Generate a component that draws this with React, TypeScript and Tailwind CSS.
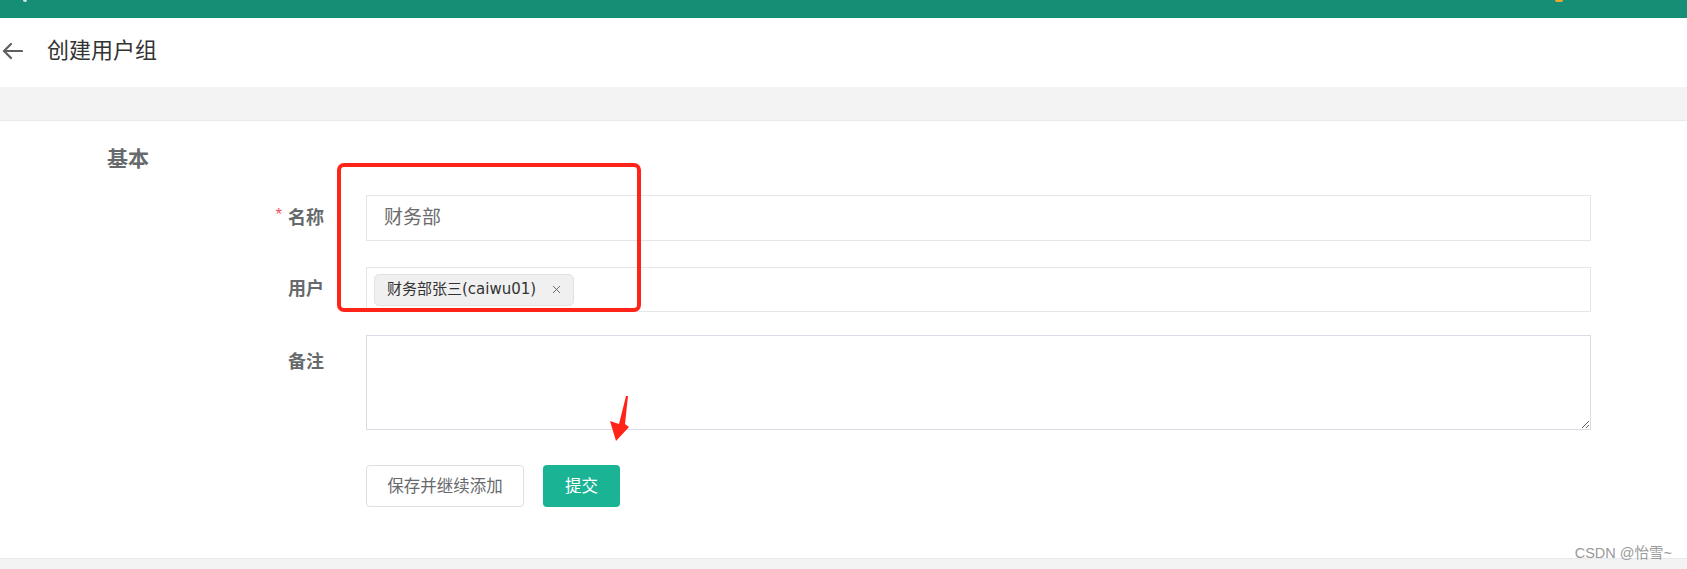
import { X } from 'lucide-react';

const cjk = { fontFamily: '"Liberation Sans", "Noto Sans CJK SC", sans-serif' };

function FormRow({
  label,
  required,
  top,
  children,
}: {
  label: string;
  required?: boolean;
  top?: boolean;
  children: React.ReactNode;
}) {
  return (
    <div className={`flex ${top ? 'items-start' : 'items-center'}`}>
      <div
        className={`w-[84px] shrink-0 flex justify-end items-center text-[18px] font-bold text-[#676a6c] ${
          top ? 'h-[54px]' : ''
        }`}
      >
        {required && <span className="text-[#ed5565] text-[17px] font-normal mr-[6px] -mt-[6px]">*</span>}
        {label}
      </div>
      <div className="flex-1 ml-[42px]">{children}</div>
    </div>
  );
}

export default function App() {
  return (
    <div className="relative h-screen flex flex-col bg-white" style={cjk}>
      {/* top bar */}
      <div className="h-[18px] shrink-0 bg-[#168e75] flex items-start">
        <span className="ml-[23px] w-[4px] h-[2px] bg-[#cfe9e2] rounded-b-sm" />
        <span className="ml-auto mr-[124px] w-[8px] h-[2px] bg-[#f0a830] rounded-b-full" />
      </div>

      {/* page header */}
      <div className="h-[69px] shrink-0 flex items-center">
        <svg width="22" height="18" viewBox="0 0 22 18" className="ml-[1px] mt-[-4px]" fill="none">
          <path d="M21 9H3.5M10 2L3 9l7 7" stroke="#5f5f5f" strokeWidth="2.2" strokeLinecap="round" strokeLinejoin="round" />
        </svg>
        <h1 className="ml-[24px] text-[22px] text-[#333] font-normal -mt-[4px]">创建用户组</h1>
      </div>

      <div className="h-[34px] shrink-0 bg-[#f3f3f4] border-b border-[#e7eaec]" />

      {/* content */}
      <div className="h-[437px] shrink-0 pl-[107px] pr-[96px]">
        <h2 className="mt-[24px] text-[21px] font-bold text-[#676a6c] leading-[28px]">基本</h2>

        <div className="pl-[133px] mt-[22px] flex flex-col">
          <FormRow label="名称" required>
            <div className="h-[46px] border border-[#e5e6e7] flex items-center pl-[17px] text-[19px] text-[#6b6b6b]">
              财务部
            </div>
          </FormRow>

          <div className="h-[26px]" />

          <FormRow label="用户">
            <div className="h-[45px] border border-[#e5e6e7] flex items-center pl-[7px]">
              <span
                className="h-[32px] w-[200px] flex items-center pl-[12px] pr-[10px] bg-[#f0f0f0] border border-[#e2e2e2] rounded-[5px] text-[15px] text-[#333]"
                style={{ fontFamily: '"DejaVu Sans", "Noto Sans CJK SC", sans-serif' }}
              >
                财务部张三(caiwu01)
                <X className="ml-auto text-[#555]" size={13} strokeWidth={1.6} />
              </span>
            </div>
          </FormRow>

          <div className="h-[23px]" />

          <FormRow label="备注" top>
            <textarea className="block w-full h-[95px] border border-[#dcdce6] outline-none" />
          </FormRow>

          <div className="h-[35px]" />

          <div className="flex pl-[126px] gap-[19px]">
            <button className="h-[42px] w-[158px] border border-[#dedfe3] rounded-[4px] bg-white text-[16.5px] text-[#676a6c]">
              保存并继续添加
            </button>
            <button className="h-[42px] w-[77px] rounded-[4px] bg-[#1ab394] text-[16.5px] text-white">提交</button>
          </div>
        </div>
      </div>

      <div className="flex-1 bg-[#f3f3f4] border-t border-[#e7eaec]" />

      {/* annotation overlay */}
      <div className="absolute left-[337px] top-[163px] w-[304px] h-[149px] border-[4px] border-[#ff2418] rounded-[7px] pointer-events-none" />
      <svg className="absolute left-0 top-0 pointer-events-none" width="700" height="460">
        <polygon points="628,396 625,424 629,427 616,441 610,421 619,424 626,396" fill="#ff2418" />
      </svg>

      <div className="absolute right-[15px] bottom-[8px] text-[14.5px] leading-[16px] text-[#9a9a9a]">CSDN @怡雪~</div>
    </div>
  );
}
